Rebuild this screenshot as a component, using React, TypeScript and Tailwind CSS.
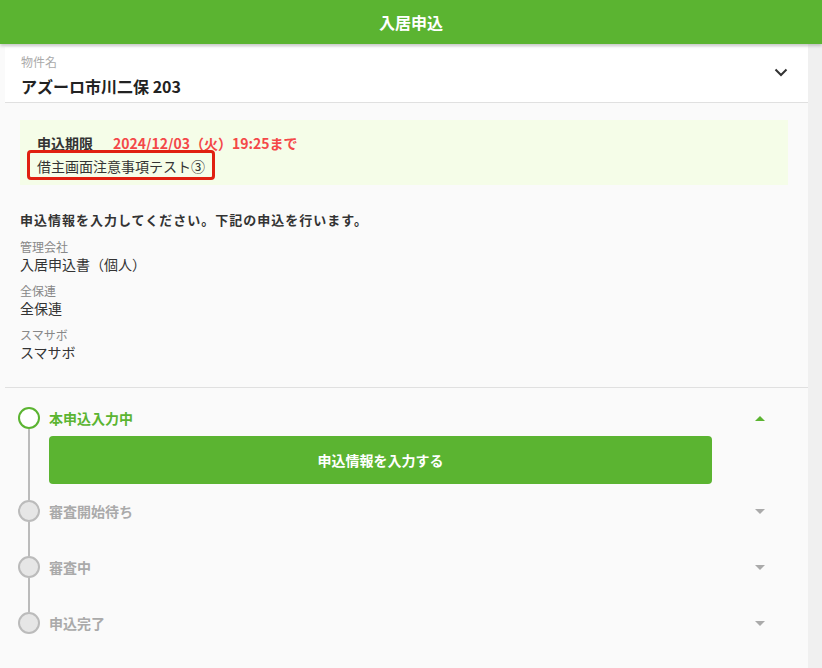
import React from "react";

const font = { fontFamily: '"Noto Sans CJK JP", "Noto Sans", sans-serif' };

function Step({
  label,
  active,
  last,
  children,
  tall,
}: {
  label: string;
  active?: boolean;
  last?: boolean;
  children?: React.ReactNode;
  tall?: boolean;
}) {
  return (
    <div className="flex">
      <div className="flex w-[22px] flex-col items-center">
        <div
          className={
            active
              ? "h-[22px] w-[22px] shrink-0 rounded-full border-2 border-[#5bb431] bg-white"
              : "h-[22px] w-[22px] shrink-0 rounded-full border-2 border-[#bbbbbb] bg-[#e6e6e6]"
          }
        />
        {!last && <div className="w-[2px] flex-1 bg-[#bbbbbb]" />}
      </div>
      <div className={"ml-[9px] flex flex-1 flex-col " + (last ? "pb-[20px]" : tall ? "pb-[16px]" : "pb-[34px]")}>
        <div className="flex h-[22px] items-center justify-between">
          <span
            className={
              active
                ? "text-[14px] font-bold leading-[20px] text-[#5bb431]"
                : "text-[14px] font-bold leading-[20px] text-[#aaaaaa]"
            }
          >
            {label}
          </span>
          {active ? (
            <div className="h-0 w-0 border-b-[5px] border-l-[5px] border-r-[5px] border-b-[#5bb431] border-l-transparent border-r-transparent" />
          ) : (
            <div className="h-0 w-0 border-t-[5px] border-l-[5px] border-r-[5px] border-t-[#aaaaaa] border-l-transparent border-r-transparent" />
          )}
        </div>
        {children}
      </div>
    </div>
  );
}

export default function App() {
  return (
    <div className="min-h-[668px] w-[822px] bg-[#f0f0f0] text-[#333333]" style={font}>
      <div className="relative z-10 flex h-[44px] items-center justify-center bg-[#5bb431] shadow-[0_2px_3px_rgba(0,0,0,0.2)]">
        <span className="text-[16px] font-bold text-white">入居申込</span>
      </div>
      <div className="w-[808px] bg-[#fafafa] pb-[20px] pt-[3px]">
        <div className="ml-[5px] flex items-center border-b border-[#e0e0e0] bg-white pb-[6px] pl-[16px] pr-[20px] pt-[7px]">
          <div className="flex flex-1 flex-col gap-[6px]">
            <span className="text-[12px] leading-[16px] text-[#aaaaaa]">物件名</span>
            <span className="text-[16px] font-bold leading-[20px] text-[#222222]">アズーロ市川二保 203</span>
          </div>
          <svg width="14" height="9" viewBox="0 0 14 9" className="mt-[-6px]">
            <path d="M1.5 1.5 L7 7 L12.5 1.5" fill="none" stroke="#333" strokeWidth="2" />
          </svg>
        </div>

        <div className="px-[20px]">
          <div className="mt-[17px] bg-[#f5fde8] pb-[8px] pl-[17px] pt-[13px]">
            <div className="flex items-center text-[14px] font-bold leading-[20px]">
              <span className="text-[#333333]">申込期限</span>
              <span className="ml-[20px] text-[#f44848]">2024/12/03（火）19:25まで</span>
            </div>
            <div className="relative inline-block text-[14px] leading-[20px] text-[#333333]">
              借主画面注意事項テスト③
              <span className="absolute bottom-[-4px] left-[-10px] right-[-10px] top-[-6px] rounded-[4px] border-[3px] border-[#e02010]" />
            </div>
          </div>

          <div className="mt-[25px] text-[13px] font-bold leading-[20px] tracking-[1px] text-[#333333]">
            申込情報を入力してください。下記の申込を行います。
          </div>
          <div className="mt-[9px] flex flex-col">
            <span className="text-[12px] leading-[16px] text-[#888888]">管理会社</span>
            <span className="text-[14px] leading-[18px]">入居申込書（個人）</span>
            <span className="mt-[10px] text-[12px] leading-[16px] text-[#888888]">全保連</span>
            <span className="text-[14px] leading-[18px]">全保連</span>
            <span className="mt-[10px] text-[12px] leading-[16px] text-[#888888]">スマサボ</span>
            <span className="text-[14px] leading-[18px]">スマサボ</span>
          </div>
        </div>

        <div className="ml-[5px] mt-[26px] border-t border-[#e0e0e0] pl-[13px] pr-[43px] pt-[19px]">
          <Step label="本申込入力中" active tall>
            <button className="mt-[7px] flex h-[48px] w-[663px] items-center justify-center rounded-[4px] bg-[#5bb431] text-[14px] font-bold text-white">
              申込情報を入力する
            </button>
          </Step>
          <Step label="審査開始待ち" />
          <Step label="審査中" />
          <Step label="申込完了" last />
        </div>
      </div>
    </div>
  );
}
